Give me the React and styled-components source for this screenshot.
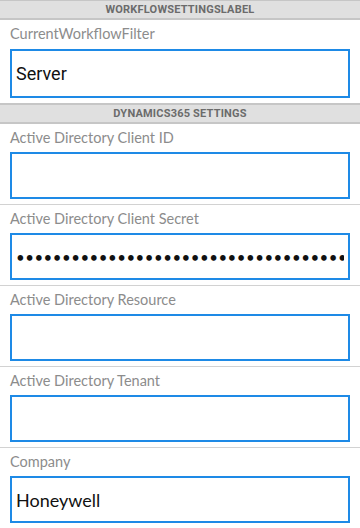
import React from 'react'
import styled, { createGlobalStyle } from 'styled-components'

const GlobalStyle = createGlobalStyle`
  html, body {
    margin: 0;
    padding: 0;
    background: #ffffff;
  }
  * {
    box-sizing: border-box;
  }
`

const Page = styled.div`
  width: 360px;
  min-height: 528px;
  background: #ffffff;
  display: flex;
  flex-direction: column;
  font-family: Lato, "Open Sans", Roboto, sans-serif;
`

const SectionHeader = styled.div`
  height: ${p => (p.$first ? '20px' : '21px')};
  background: #e0e0e0;
  border-top: ${p => (p.$first ? '1px' : '2px')} solid #c6c6c6;
  border-bottom: 2px solid #c6c6c6;
  display: flex;
  align-items: center;
  justify-content: center;
  font-family: Roboto, "Liberation Sans", sans-serif;
  font-weight: 700;
  font-size: 11px;
  letter-spacing: 0.2px;
  color: #6b6b6b;
  text-transform: uppercase;
`

const FieldRow = styled.div`
  display: flex;
  flex-direction: column;
  padding: 4px 10px 5px;
  border-top: ${p => (p.$divider ? '1px solid #d2d2d2' : 'none')};
`

const Label = styled.div`
  font-size: 14.5px;
  line-height: 20px;
  color: #8c8c8c;
  margin-bottom: ${p => (p.$tall ? '5px' : '4px')};
  white-space: nowrap;
`

const Input = styled.input`
  width: 100%;
  height: ${p => (p.$tall ? '49px' : '47px')};
  border: 2px solid #1e8ae6;
  border-radius: 0;
  padding: 0 4px;
  outline: none;
  background: #ffffff;
  color: #111111;
  font-family: ${p => (p.$roboto ? 'Roboto, sans-serif' : 'Lato, "Open Sans", sans-serif')};
  font-size: ${p => (p.$password ? '15px' : '18px')};
  letter-spacing: ${p => (p.$password ? '0.5px' : '0')};
`

const Field = ({ label, value = '', divider, password, roboto, tall }) => (
  <FieldRow $divider={divider}>
    <Label $tall={tall}>{label}</Label>
    <Input
      $tall={tall}
      $password={password}
      $roboto={roboto}
      type={password ? 'password' : 'text'}
      defaultValue={value}
      readOnly
    />
  </FieldRow>
)

export default function App() {
  return (
    <>
      <GlobalStyle />
      <Page>
        <SectionHeader $first>WORKFLOWSETTINGSLABEL</SectionHeader>
        <Field label="CurrentWorkflowFilter" value="Server" roboto tall />
        <SectionHeader>DYNAMICS365 SETTINGS</SectionHeader>
        <Field label="Active Directory Client ID" />
        <Field
          label="Active Directory Client Secret"
          value="abcdefghijklmnopqrstuvwxyzabcdefghijklmnopqrstuvwxyz0123456789"
          password
          divider
        />
        <Field label="Active Directory Resource" divider />
        <Field label="Active Directory Tenant" divider />
        <Field label="Company" value="Honeywell" divider />
      </Page>
    </>
  )
}
